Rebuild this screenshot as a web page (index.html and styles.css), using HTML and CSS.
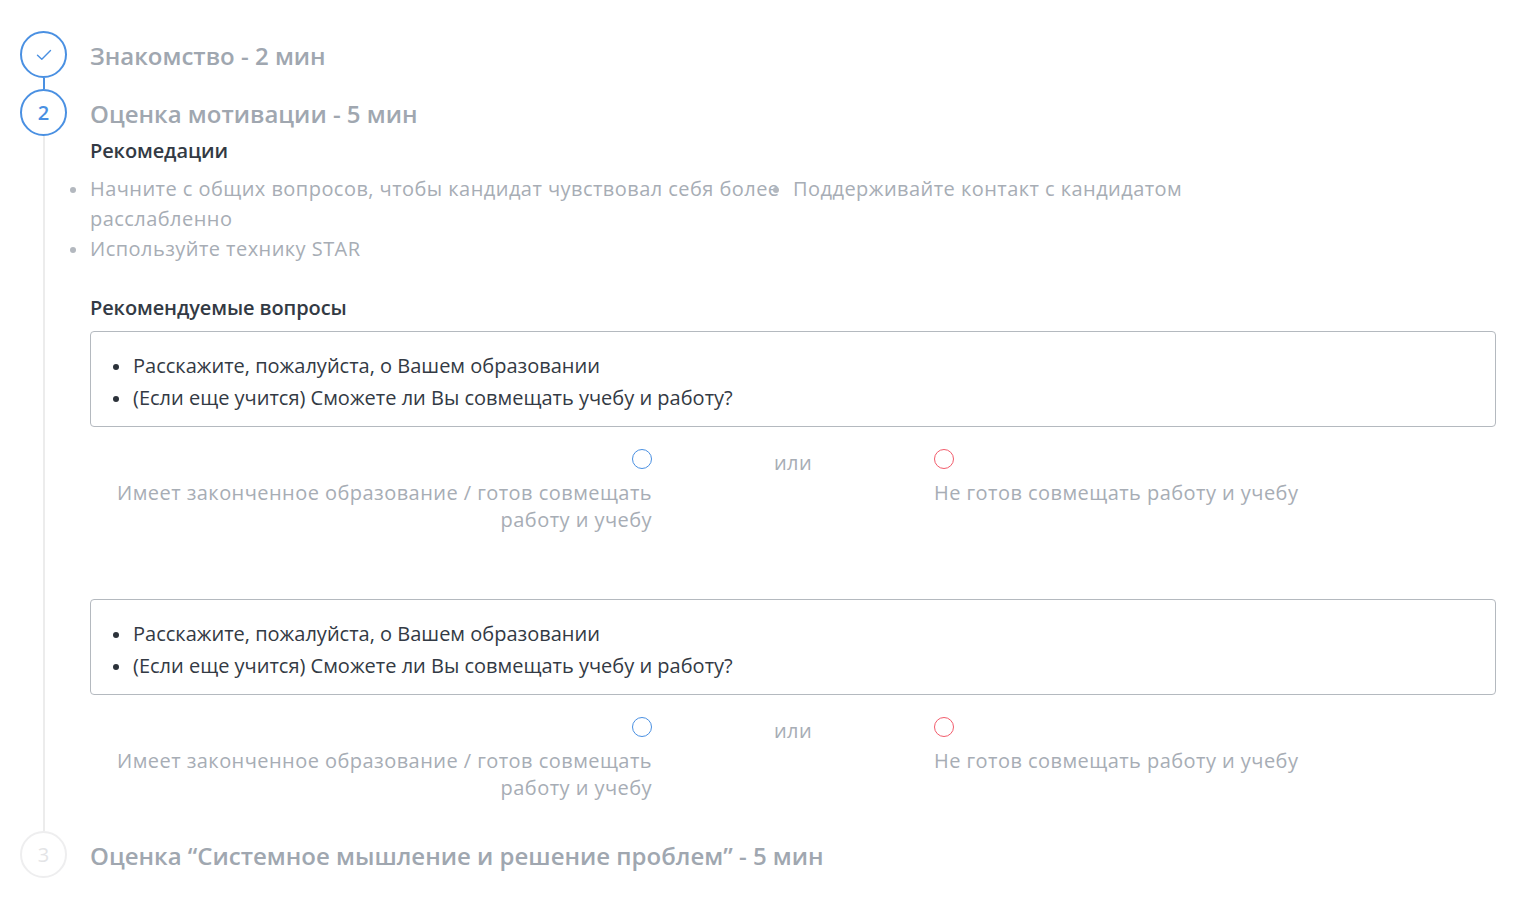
FILE: index.html
```html
<!DOCTYPE html>
<html lang="ru">
<head>
<meta charset="utf-8">
<title>Интервью</title>
<link rel="stylesheet" href="styles.css">
</head>
<body>
<div class="steps">
  <section class="step step-done">
    <div class="rail">
      <div class="circle circle-active">
        <svg width="16" height="12" viewBox="0 0 16 12"><path d="M1.5 6.2 L5.8 10.3 L14.5 1.6" fill="none" stroke="#4a90e2" stroke-width="1.4" stroke-linecap="round" stroke-linejoin="round"/></svg>
      </div>
      <div class="line line-blue"></div>
    </div>
    <div class="content content-short">
      <h2 class="title">Знакомство - 2 мин</h2>
    </div>
  </section>

  <section class="step step-current">
    <div class="rail">
      <div class="circle circle-active">2</div>
      <div class="line line-gray"></div>
    </div>
    <div class="content content-body">
      <h2 class="title">Оценка мотивации - 5 мин</h2>
      <h3 class="subtitle">Рекомедации</h3>
      <ul class="tips">
        <li>Начните с общих вопросов, чтобы кандидат чувствовал себя более расслабленно</li>
        <li>Поддерживайте контакт с кандидатом</li>
        <li>Используйте технику STAR</li>
      </ul>
      <h3 class="subtitle subtitle-questions">Рекомендуемые вопросы</h3>

      <div class="question">
        <div class="qbox">
          <ul class="qlist">
            <li>Расскажите, пожалуйста, о Вашем образовании</li>
            <li>(Если еще учится) Сможете ли Вы совмещать учебу и работу?</li>
          </ul>
        </div>
        <div class="choice">
          <label class="option option-left">
            <span class="radio radio-blue"></span>
            <span class="option-text">Имеет законченное образование / готов совмещать работу и учебу</span>
          </label>
          <div class="or">или</div>
          <label class="option option-right">
            <span class="radio radio-red"></span>
            <span class="option-text">Не готов совмещать работу и учебу</span>
          </label>
        </div>
      </div>

      <div class="question">
        <div class="qbox">
          <ul class="qlist">
            <li>Расскажите, пожалуйста, о Вашем образовании</li>
            <li>(Если еще учится) Сможете ли Вы совмещать учебу и работу?</li>
          </ul>
        </div>
        <div class="choice">
          <label class="option option-left">
            <span class="radio radio-blue"></span>
            <span class="option-text">Имеет законченное образование / готов совмещать работу и учебу</span>
          </label>
          <div class="or">или</div>
          <label class="option option-right">
            <span class="radio radio-red"></span>
            <span class="option-text">Не готов совмещать работу и учебу</span>
          </label>
        </div>
      </div>
    </div>
  </section>

  <section class="step step-next">
    <div class="rail">
      <div class="circle circle-idle">3</div>
    </div>
    <div class="content">
      <h2 class="title">Оценка “Системное мышление и решение проблем” - 5 мин</h2>
    </div>
  </section>
</div>
</body>
</html>
```

FILE: styles.css
```css
* { box-sizing: border-box; }

html, body {
  margin: 0;
  padding: 0;
  background: #ffffff;
}

body {
  font-family: "Open Sans", "Noto Sans", "Liberation Sans", sans-serif;
  color: #333a44;
}

.steps {
  padding: 31px 24px 0 20px;
  display: flex;
  flex-direction: column;
}

.step {
  display: flex;
  align-items: stretch;
}

.rail {
  width: 47px;
  flex: 0 0 47px;
  display: flex;
  flex-direction: column;
  align-items: center;
}

.circle {
  width: 47px;
  height: 47px;
  flex: 0 0 47px;
  border-radius: 50%;
  display: flex;
  align-items: center;
  justify-content: center;
  font-size: 20px;
  font-weight: 600;
  background: #fff;
}

.circle-active {
  border: 2px solid #4a90e2;
  color: #4a90e2;
}

.circle-idle {
  border: 2px solid #eeeeef;
  color: #e3e4e6;
  font-weight: 400;
}

.line {
  width: 2px;
  flex: 1 1 auto;
}

.line-blue { background: #4a90e2; }
.line-gray { background: #ececec; }

.content {
  flex: 1 1 auto;
  min-width: 0;
  margin-left: 23px;
}

.content-short { padding-bottom: 10px; }
.content-body { padding-bottom: 30px; }

.title {
  margin: 0;
  font-size: 24px;
  font-weight: 600;
  line-height: 47px;
  color: #a0a7b0;
  padding-top: 1px;
}

.subtitle {
  margin: 2px 0 0;
  font-size: 20px;
  font-weight: 600;
  line-height: 24px;
  letter-spacing: -0.1px;
  color: #333a44;
}

.subtitle-questions { margin-top: 32px; }

.tips {
  list-style: none;
  margin: 11px 0 0;
  padding: 0;
  display: grid;
  grid-template-columns: 1fr 1fr;
  font-size: 20px;
  letter-spacing: 0.45px;
  line-height: 30px;
  color: #a7adb5;
}

.tips li {
  position: relative;
}

.tips li::before {
  content: "";
  position: absolute;
  left: -20px;
  top: 13px;
  width: 6px;
  height: 6px;
  border-radius: 50%;
  background: #b3b8bf;
}

.question + .question { margin-top: 66px; }

.question:first-of-type { margin-top: 11px; }

.qbox {
  border: 1px solid #b4b9bf;
  border-radius: 4px;
  padding: 18px 0 12px 42px;
}

.qlist {
  list-style: none;
  margin: 0;
  padding: 0;
  font-size: 20px;
  line-height: 32px;
  color: #333a44;
}

.qlist li { position: relative; }

.qlist li::before {
  content: "";
  position: absolute;
  left: -20px;
  top: 14px;
  width: 6px;
  height: 6px;
  border-radius: 50%;
  background: #2c323a;
}

.choice {
  margin-top: 22px;
  display: grid;
  grid-template-columns: 1fr 282px 1fr;
  font-size: 20px;
  letter-spacing: 0.45px;
  line-height: 27px;
  color: #a7adb5;
}

.option {
  display: flex;
  flex-direction: column;
}

.option-left {
  align-items: flex-end;
  text-align: right;
}

.option-right {
  align-items: flex-start;
  text-align: left;
}

.radio {
  width: 20px;
  height: 20px;
  border-radius: 50%;
  background: #fff;
  display: block;
}

.radio-blue { border: 1.5px solid #4a90e2; }
.radio-red { border: 1.5px solid #f25c6c; }

.option-text { margin-top: 10px; }

.or {
  text-align: center;
  line-height: 27px;
  margin-top: 0;
}
```
